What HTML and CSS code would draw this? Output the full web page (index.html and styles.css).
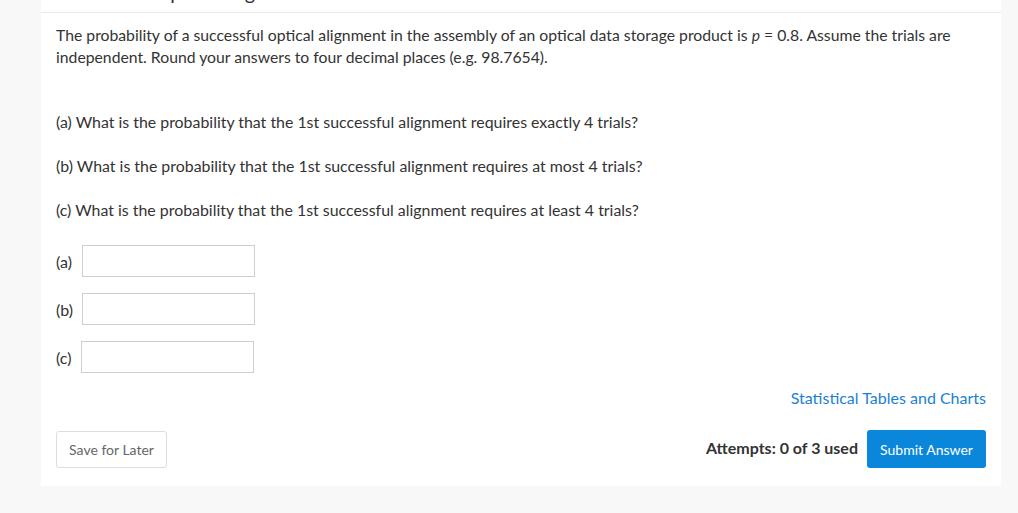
FILE: index.html
```html
<!DOCTYPE html>
<html>
<head>
<meta charset="utf-8">
<link rel="stylesheet" href="styles.css">
</head>
<body>
<div class="card">
  <div class="head"><span class="head-text">Current Attempt in Progress</span></div>
  <div class="body">
    <p class="intro">The probability of a successful optical alignment in the assembly of an optical data storage product is <i>p</i> = 0.8. Assume the trials are independent. Round your answers to four decimal places (e.g. 98.7654).</p>
    <p class="q q-first">(a) What is the probability that the 1st successful alignment requires exactly 4 trials?</p>
    <p class="q">(b) What is the probability that the 1st successful alignment requires at most 4 trials?</p>
    <p class="q">(c) What is the probability that the 1st successful alignment requires at least 4 trials?</p>
    <div class="answers">
      <div class="ans"><span class="lbl">(a)</span><span class="box"></span></div>
      <div class="ans"><span class="lbl">(b)</span><span class="box"></span></div>
      <div class="ans"><span class="lbl lbl-c">(c)</span><span class="box"></span></div>
    </div>
    <div class="links"><a class="link">Statistical Tables and Charts</a></div>
    <div class="footer">
      <button class="save">Save for Later</button>
      <div class="right">
        <span class="attempts">Attempts: 0 of 3 used</span>
        <button class="submit">Submit Answer</button>
      </div>
    </div>
  </div>
</div>
</body>
</html>
```

FILE: styles.css
```css
html, body {
  margin: 0;
  padding: 0;
  background: #f8f8f8;
}
body {
  font-family: Lato, "Open Sans", sans-serif;
  color: #333;
  height: 513px;
  overflow: hidden;
}
.card {
  margin-left: 41px;
  width: 960px;
  background: #fff;
  height: 486px;
}
.head {
  height: 13px;
  border-bottom: 1px solid #e9e9e9;
  overflow: hidden;
  box-sizing: border-box;
  padding-left: 4px;
}
.head-text {
  display: block;
  font-size: 20px;
  line-height: 20px;
  margin-top: -18px;
  color: #333;
}
.body {
  padding: 11px 15px 0 15px;
}
.intro {
  margin: 0;
  font-size: 15.75px;
  line-height: 22px;
}
.q {
  margin: 0;
  font-size: 15.9px;
  line-height: 22px;
  margin-top: 22px;
}
.q-first {
  margin-top: 43px;
}
.answers {
  margin-top: 24px;
  display: flex;
  flex-direction: column;
  gap: 16px;
}
.ans {
  display: flex;
  align-items: center;
  height: 32px;
}
.lbl {
  font-size: 16px;
  width: 26px;
}
.lbl-c { width: 25px; }
.box {
  display: block;
  width: 171px;
  height: 30px;
  border: 1px solid #cfcfcf;
}
.links {
  margin-top: 14px;
  text-align: right;
}
.link {
  color: #1a7fd4;
  font-size: 16px;
  line-height: 22px;
}
.footer {
  margin-top: 21px;
  display: flex;
  justify-content: space-between;
  align-items: center;
}
.save {
  font-family: Lato, sans-serif;
  font-size: 14px;
  color: #666;
  background: #fff;
  border: 1px solid #ddd;
  border-radius: 3px;
  width: 111px;
  height: 37px;
  padding: 0;
}
.right {
  display: flex;
  align-items: center;
  gap: 9px;
}
.attempts {
  font-size: 16px;
  font-weight: 700;
  color: #333;
  margin-top: -4px;
}
.submit {
  font-family: Lato, sans-serif;
  font-size: 14px;
  color: #fff;
  background: #0a86db;
  border: none;
  border-radius: 3px;
  width: 119px;
  height: 38px;
  padding: 0;
}
```
